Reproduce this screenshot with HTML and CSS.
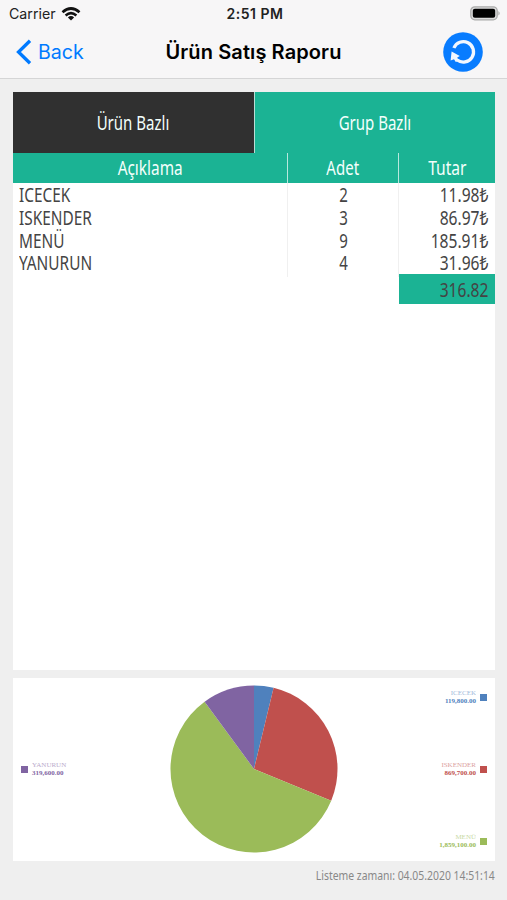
FILE: index.html
```html
<!DOCTYPE html>
<html lang="tr">
<head>
<meta charset="utf-8">
<title>Ürün Satış Raporu</title>
<link rel="stylesheet" href="styles.css">
</head>
<body>
<header>
    <div class="status">
        <div class="carrier">
            <span>Carrier</span>
            <svg width="20" height="14" viewBox="0 0 20 14">
                <path d="M1.5 5.2 Q10 -2.2 18.5 5.2" fill="none" stroke="#111" stroke-width="2.7"/>
                <path d="M4.6 8.5 Q10 3.8 15.4 8.5" fill="none" stroke="#111" stroke-width="2.5"/>
                <path d="M6.9 10.4 Q10 7.6 13.1 10.4 L10 13.6 Z" fill="#111"/>
            </svg>
        </div>
        <span class="clock">2:51 PM</span>
        <svg class="battery" width="31" height="15" viewBox="0 0 31 15">
            <rect x=".8" y=".8" width="26.4" height="13" rx="4" fill="#ddd" stroke="#aaa" stroke-width="1.3"/>
            <rect x="2.8" y="2.8" width="22.4" height="9" rx="2" fill="#000"/>
            <path d="M28.4 5 Q31 7.3 28.4 9.6 Z" fill="#aaa"/>
        </svg>
    </div>
    <nav>
        <a class="back">
            <svg width="16" height="26" viewBox="0 0 16 26"><path d="M14 1.7 L2.5 13 L14 24.3" fill="none" stroke="#007aff" stroke-width="3.3"/></svg>
            <span>Back</span>
        </a>
        <h1>Ürün Satış Raporu</h1>
        <svg class="refresh" width="40" height="40" viewBox="0 0 40 40">
            <circle cx="20" cy="20" r="19.8" fill="#087cff"/>
            <path d="M10.9 16 A10.2 10.2 0 1 1 14.2 28" fill="none" stroke="#f2f7ff" stroke-width="3.3"/>
            <path d="M8.6 19.6 L16.8 24 L14.2 25.6 L15.8 28.6 L12.8 30 L11 27.2 L7.6 28.4 Z" fill="#f2f7ff"/>
        </svg>
    </nav>
</header>

<main>
    <section class="report">
        <div class="tabs">
            <div class="tab dark"><span class="cond">Ürün Bazlı</span></div>
            <div class="tab"><span class="cond">Grup Bazlı</span></div>
        </div>
        <div class="row head">
            <div><span class="cond">Açıklama</span></div>
            <div><span class="cond">Adet</span></div>
            <div><span class="cond">Tutar</span></div>
        </div>
        <div class="row">
            <div><span class="cond">ICECEK</span></div>
            <div><span class="cond">2</span></div>
            <div><span class="cond">11.98₺</span></div>
        </div>
        <div class="row">
            <div><span class="cond">ISKENDER</span></div>
            <div><span class="cond">3</span></div>
            <div><span class="cond">86.97₺</span></div>
        </div>
        <div class="row">
            <div><span class="cond">MENÜ</span></div>
            <div><span class="cond">9</span></div>
            <div><span class="cond">185.91₺</span></div>
        </div>
        <div class="row">
            <div><span class="cond">YANURUN</span></div>
            <div><span class="cond">4</span></div>
            <div><span class="cond">31.96₺</span></div>
        </div>
        <div class="total"><span class="cond">316.82</span></div>
    </section>

    <section class="chart">
        <div class="legend left">
            <div class="item purple"><i></i><p><span>YANURUN</span><b>319,600.00</b></p></div>
        </div>
        <svg class="pie" width="168" height="168" viewBox="-84 -84 168 168">
            <path d="M0 0 L0 -83.5 A83.5 83.5 0 0 1 19.6 -81.2 Z" fill="#4f81bd"/>
            <path d="M0 0 L19.6 -81.2 A83.5 83.5 0 0 1 77.2 31.8 Z" fill="#c0504d"/>
            <path d="M0 0 L77.2 31.8 A83.5 83.5 0 1 1 -49.4 -67.3 Z" fill="#9bbb59"/>
            <path d="M0 0 L-49.4 -67.3 A83.5 83.5 0 0 1 0 -83.5 Z" fill="#8064a2"/>
        </svg>
        <div class="legend right">
            <div class="item blue"><p><span>ICECEK</span><b>119,800.00</b></p><i></i></div>
            <div class="item red"><p><span>ISKENDER</span><b>869,700.00</b></p><i></i></div>
            <div class="item green"><p><span>MENÜ</span><b>1,859,100.00</b></p><i></i></div>
        </div>
    </section>
    <footer><span class="cond">Listeme zamanı: 04.05.2020 14:51:14</span></footer>
</main>
</body>
</html>
```
FILE: styles.css
```css
* {
    box-sizing: border-box;
}
body {
    margin: 0;
    height: 900px;
    overflow: hidden;
    background: #efefef;
    font-family: Inter, "Liberation Sans", sans-serif;
}
header {
    height: 79px;
    background: #f7f6f7;
    border-bottom: 1px solid #d5d5d6;
}
.status {
    display: grid;
    grid-template-columns: 1fr auto 1fr;
    align-items: center;
    height: 27px;
    padding: 0 6px 0 9px;
    font-size: 14.2px;
    color: #222;
}
.carrier {
    display: flex;
    align-items: center;
    gap: 5px;
}
.clock {
    font-weight: 600;
    font-size: 14px;
    letter-spacing: .5px;
}
.battery {
    justify-self: end;
}
nav {
    display: grid;
    grid-template-columns: 1fr auto 1fr;
    align-items: center;
    height: 50px;
    padding: 0 16px;
}
.back {
    display: flex;
    align-items: center;
    gap: 6px;
    font-size: 19.6px;
    color: #007aff;
}
h1 {
    margin: 0;
    font-size: 20px;
    font-weight: 600;
    letter-spacing: .1px;
}
.refresh {
    justify-self: end;
    margin-right: 8px;
}
main {
    padding: 13px 12px 0 13px;
}
.cond {
    display: inline-block;
    font-family: "Noto Sans", sans-serif;
    font-size: 19px;
    white-space: nowrap;
    transform: scaleX(.79);
}
.report {
    height: 578px;
    background: #fff;
    color: #444;
}
.tabs {
    display: flex;
    height: 61px;
    background: #1bb394;
}
.tab {
    flex: 1;
    display: flex;
    align-items: center;
    justify-content: center;
    color: #f4fffc;
}
.tab.dark {
    background: #303030;
    border-right: 1px solid #b9ddd5;
}
.row {
    display: grid;
    grid-template-columns: 275px 111px 96px;
    height: 22.8px;
    line-height: 25px;
}
.row div {
    text-align: center;
    border-right: 1px solid #f0f0f0;
}
.row div:first-child {
    padding-left: 6px;
    text-align: left;
}
.row div:first-child .cond {
    transform: scaleX(.81);
    transform-origin: left;
}
.row div:last-child {
    padding-right: 7px;
    text-align: right;
    border: 0;
}
.row div:last-child .cond,
.total .cond {
    transform: scaleX(.82);
    transform-origin: right;
}
.row.head {
    height: 30px;
    line-height: 31px;
    background: #1bb394;
    color: #f4fffc;
}
.row.head div {
    padding: 0;
    text-align: center;
    border-color: #b8e8de;
}
.row.head div .cond {
    transform-origin: center;
}
.total {
    width: 96px;
    height: 30px;
    margin-left: auto;
    padding-right: 7px;
    line-height: 32px;
    text-align: right;
    background: #1bb394;
}
.chart {
    display: grid;
    grid-template-columns: 1fr 168px 1fr;
    height: 183px;
    margin-top: 8px;
    padding: 7px 8px 8px;
    background: #fff;
}
.legend {
    display: flex;
    flex-direction: column;
    justify-content: space-between;
}
.legend.left {
    justify-content: center;
}
.item {
    display: flex;
    align-items: center;
    gap: 4px;
    height: 24px;
}
.right .item {
    justify-content: flex-end;
    text-align: right;
}
.item i {
    width: 7px;
    height: 7px;
    background: currentColor;
}
.item p {
    margin: 0;
    font: 7px/8px "Liberation Serif", serif;
}
.item span,
.item b {
    display: block;
}
.item span {
    opacity: .55;
}
.blue {
    color: #4f81bd;
}
.red {
    color: #c0504d;
}
.green {
    color: #9bbb59;
}
.purple {
    color: #8064a2;
}
footer {
    padding-top: 5px;
    line-height: 17px;
    text-align: right;
    color: #888;
}
footer .cond {
    font-size: 13px;
    transform: scaleX(.8);
    transform-origin: right;
}
```
